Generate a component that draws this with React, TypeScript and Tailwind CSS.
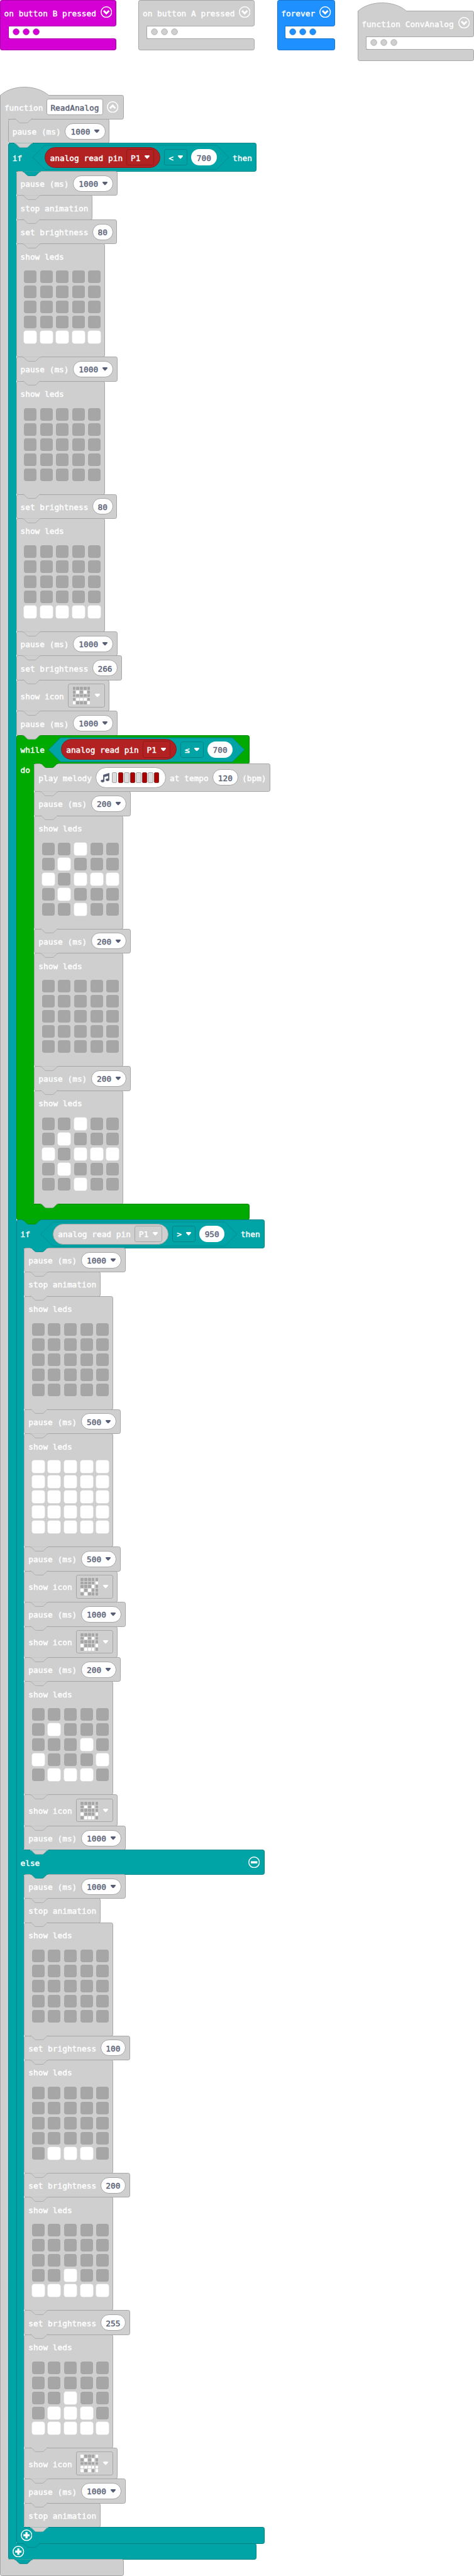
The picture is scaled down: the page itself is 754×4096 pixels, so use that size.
import React from "react";
import type { ReactNode } from "react";

type Tone = "gray" | "teal" | "green" | "magenta" | "blue";

const surface: Record<Tone, string> = {
  gray: "bg-[#cfcfcf] border-[#a6a6a6]",
  teal: "bg-[#00a4a6] border-[#008385]",
  green: "bg-[#00aa00] border-[#008800]",
  magenta: "bg-[#d400d4] border-[#aa00aa]",
  blue: "bg-[#1e90ff] border-[#1873cc]",
};

const fills: Record<Tone, string> = {
  gray: "fill-[#cfcfcf]",
  teal: "fill-[#00a4a6]",
  green: "fill-[#00aa00]",
  magenta: "fill-[#d400d4]",
  blue: "fill-[#1e90ff]",
};

const strokes: Record<Tone, string> = {
  gray: "stroke-[#a6a6a6]",
  teal: "stroke-[#008385]",
  green: "stroke-[#008800]",
  magenta: "stroke-[#aa00aa]",
  blue: "stroke-[#1873cc]",
};

const TAB = "c2,0 3,1 4,2 l4,4 c1,1 2,2 4,2 h12 c2,0 3,-1 4,-2 l4,-4 c1,-1 2,-2 4,-2";

/* Connector tab of the block above, laid over the top edge of this block. */
function Notch({ tone = "gray", inArm = "none" }: { tone?: Tone; inArm?: "none" | "thin" | "wide" }) {
  const left = inArm === "wide" ? "left-[37.9px]" : inArm === "thin" ? "left-[21.9px]" : "left-[9.1px]";
  return (
    <svg className={`absolute -top-[0.5px] ${left} h-[7.2px] w-[28.8px] overflow-visible`} viewBox="0 0 36 9">
      <path className={fills[tone]} d={`M0,-0.8 V0 ${TAB} V-0.8 Z`} />
      <path className={strokes[tone]} d={`M0,0 ${TAB}`} fill="none" strokeWidth="1.1" />
    </svg>
  );
}

function Hat({ tone = "gray" }: { tone?: Tone }) {
  return (
    <svg className="absolute -left-px -top-[17.6px] h-[18.4px] w-[77.6px] overflow-visible" viewBox="0 0 97 23">
      <path className={fills[tone]} d="M0.6,28 V22 C25,0.2 72,0.2 97,22 V23 H92 V28 Z" />
      <path className={strokes[tone]} d="M0.6,28 V22 C25,0.2 72,0.2 97,22" fill="none" strokeWidth="1.2" />
    </svg>
  );
}

function Caret({ dark = false }: { dark?: boolean }) {
  return (
    <svg className="h-[5.6px] w-2 shrink-0" viewBox="0 0 10 7">
      <path
        className={dark ? "fill-[#575e75]" : "fill-white"}
        d="M1.4,0 H8.6 C9.9,0 10.4,1.4 9.5,2.4 L6,6.3 C5.4,6.9 4.6,6.9 4,6.3 L0.5,2.4 C-0.4,1.4 0.1,0 1.4,0 Z"
      />
    </svg>
  );
}

function RoundIcon({ kind }: { kind: "down" | "up" | "plus" | "minus" }) {
  return (
    <svg className="size-[18.4px] shrink-0" viewBox="0 0 23 23" fill="none" stroke="#fff">
      <circle cx="11.5" cy="11.5" r="10.5" strokeWidth="1.8" />
      {kind === "down" && <path d="M6.2,8.8 L11.5,14.2 L16.8,8.8" strokeWidth="3.7" />}
      {kind === "up" && <path d="M6.2,14 L11.5,8.6 L16.8,14" strokeWidth="3.7" />}
      {kind === "plus" && <path d="M11.5,5.3 V17.7 M5.3,11.5 H17.7" strokeWidth="4.3" />}
      {kind === "minus" && <path d="M5,11.5 H18" strokeWidth="4.4" />}
    </svg>
  );
}

function Label({ children, className = "" }: { children: ReactNode; className?: string }) {
  return <span className={`translate-y-[0.6px] ${className}`}>{children}</span>;
}

function Value({ children, menu = false }: { children: ReactNode; menu?: boolean }) {
  return (
    <span
      className={`flex h-[26px] items-center rounded-full border border-[#a6a6a6] bg-white text-[#575e75] ${
        menu ? "gap-[6.8px] pl-[8.4px] pr-[8.4px]" : "px-[7.7px]"
      }`}
    >
      <Label>{children}</Label>
      {menu && <Caret dark />}
    </span>
  );
}

function Row({
  children,
  above = "gray",
  height = "h-[39.4px]",
}: {
  children: ReactNode;
  above?: Tone;
  height?: string;
}) {
  return (
    <div
      className={`relative -mb-px flex w-max items-center gap-[6.4px] rounded-[3.2px] border px-[5.9px] ${surface.gray} ${height}`}
    >
      <Notch tone={above} />
      {children}
    </div>
  );
}

function Pause({ ms, above }: { ms: number; above?: Tone }) {
  return (
    <Row above={above}>
      <Label>pause (ms)</Label>
      <Value menu>{ms}</Value>
    </Row>
  );
}

function StopAnimation() {
  return (
    <Row>
      <Label>stop animation</Label>
    </Row>
  );
}

function Brightness({ level }: { level: number }) {
  return (
    <Row>
      <Label>set brightness</Label>
      <Value>{level}</Value>
    </Row>
  );
}

const OFF = "..... ..... ..... ..... .....";

function ShowLeds({ map = OFF }: { map?: string }) {
  return (
    <div className={`relative -mb-px h-[181px] w-[141.4px] rounded-[3.2px] border ${surface.gray}`}>
      <Notch />
      <div className="flex h-[38px] items-center px-[5.9px]">
        <Label>show leds</Label>
      </div>
      <div className="ml-[11.5px] mt-1 grid w-max grid-cols-5 gap-x-[5.6px] gap-y-1">
        {map
          .replace(/ /g, "")
          .split("")
          .map((c, i) => (
            <span
              key={i}
              className={`size-5 rounded-[4px] ${c === "#" ? "bg-white shadow-[0_0_0_0.6px_#ececec]" : "bg-[#a6a6a6]"}`}
            />
          ))}
      </div>
    </div>
  );
}

function ShowIcon({ map }: { map: string }) {
  return (
    <Row height="h-[50.6px]">
      <Label>show icon</Label>
      <span className="flex h-[37.4px] w-[58.6px] items-center justify-between rounded-[3.2px] border border-[#a6a6a6] pl-[6.4px] pr-[6.4px]">
        <span className="grid grid-cols-5 gap-[1.1px]">
          {map
            .replace(/ /g, "")
            .split("")
            .map((c, i) => (
              <span
                key={i}
                className={`size-[4.7px] rounded-[1px] ${c === "#" ? "bg-white" : "bg-[#a6a6a6]"}`}
              />
            ))}
        </span>
        <Caret />
      </span>
    </Row>
  );
}

function Condition({ op, value, filled = false, muted = false }: { op: string; value: number; filled?: boolean; muted?: boolean }) {
  return (
    <span className="relative flex h-[38.4px] w-[312px] items-center gap-[6.4px] px-[19.2px]">
      <svg className="absolute inset-0 h-full w-full overflow-visible" viewBox="0 0 390 48">
        <path
          d="M24,0 H366 L390,24 L366,48 H24 L0,24 Z"
          fill="#00a4a6"
          stroke={filled ? "#007d80" : "#008c8e"}
          strokeWidth="1.1"
        />
      </svg>
      <span
        className={`relative flex h-[33px] w-[184px] shrink-0 items-center justify-between rounded-full border pl-[7.6px] pr-[8.6px] ${
          muted ? "border-[#a6a6a6] bg-[#cfcfcf]" : "border-[#8e1b1b] bg-[#b22222]"
        }`}
      >
        <Label>analog read pin</Label>
        <span
          className={`flex h-[26.4px] w-[44.4px] items-center justify-between rounded-[3.2px] border pl-[6px] pr-[6px] ${
            muted ? "border-[#a6a6a6]" : "border-[#8e1b1b]"
          }`}
        >
          <Label>P1</Label>
          <Caret />
        </span>
      </span>
      <span className="relative flex h-[26.4px] w-[36.6px] shrink-0 items-center justify-between rounded-[3.2px] border border-[#008385] px-[6px]">
        <Label>{op}</Label>
        <Caret />
      </span>
      <span className="relative flex h-[26px] w-[40.2px] shrink-0 items-center justify-center rounded-full bg-white text-[#575e75]">
        <Label>{value}</Label>
      </span>
    </span>
  );
}

function Body({ tone, children, label }: { tone: Tone; children: ReactNode; label?: string }) {
  return (
    <div className="flex">
      <div
        className={`relative z-10 -mb-px shrink-0 border-l ${surface[tone]} ${label ? "w-[28.8px] pl-[5.9px] pt-[0.4px]" : "w-[12.8px]"}`}
      >
        {label && <Label className="inline-block">{label}</Label>}
      </div>
      <div>{children}</div>
    </div>
  );
}

function Foot({
  tone,
  width,
  above = "gray",
  arm = "thin",
  icon = false,
}: {
  tone: Tone;
  width: string;
  above?: Tone;
  arm?: "thin" | "wide";
  icon?: boolean;
}) {
  return (
    <div className={`relative -mb-px flex h-[26.6px] items-center rounded-[3.2px] rounded-tl-none border pl-[6.4px] ${surface[tone]} ${width}`}>
      <Notch tone={above} inArm={arm} />
      {icon && <RoundIcon kind="plus" />}
    </div>
  );
}

function IfHead({ above, children }: { above: Tone; children: ReactNode }) {
  return (
    <div
      className={`relative -mb-px flex h-[45.8px] w-[395px] items-center gap-[6.4px] rounded-[3.2px] rounded-bl-none border px-[5.9px] ${surface.teal}`}
    >
      <Notch tone={above} />
      <Label className="w-[25.9px]">if</Label>
      {children}
      <Label>then</Label>
    </div>
  );
}

function Dots({ tone }: { tone: Tone }) {
  return (
    <svg className="h-[11.2px] w-[43.2px]" viewBox="0 0 54 14">
      {[7, 27, 47].map((x) => (
        <circle key={x} cx={x} cy="7" r="6" className={`${fills[tone]} ${strokes[tone]}`} strokeWidth="1" />
      ))}
    </svg>
  );
}

function EventBlock({ tone, title, width, hat = false }: { tone: Tone; title: string; width: string; hat?: boolean }) {
  return (
    <div className={`${width} ${hat ? "mt-[17px]" : ""}`}>
      <div
        className={`relative -mb-px flex h-[42.3px] items-start justify-between rounded-[3.2px] rounded-bl-none border pl-[5.6px] pr-[5.8px] pt-[9px] ${surface[tone]} ${hat ? "rounded-tl-none" : ""}`}
      >
        {hat && <Hat tone={tone} />}
        <Label className="mt-[0.6px]">{title}</Label>
        <RoundIcon kind="down" />
      </div>
      <div className="flex h-[19.4px]">
        <div className={`relative z-10 -mb-px w-[12.8px] border-l ${surface[tone]}`} />
        <div className={`flex grow ${surface[tone]} border-0`}>
          <div className={`flex grow items-center rounded-l-[3.2px] border-l pl-[6px] ${surface[tone]} bg-white`}>
            <Dots tone={tone} />
          </div>
        </div>
      </div>
      <div className={`relative h-[19.8px] rounded-[3.2px] rounded-tl-none border ${surface[tone]}`} />
    </div>
  );
}

function Melody() {
  return (
    <span className="flex h-[33px] w-[111.3px] items-center rounded-full border border-[#a6a6a6] bg-white pl-[6.8px]">
      <svg className="h-[15.2px] w-[14.4px] shrink-0" viewBox="0 0 18 19" fill="#575e75">
        <path d="M5.2,3.6 L17.4,0 V13.4 H15 V6 L7.6,8.2 V16 H5.2 Z" />
        <ellipse cx="4" cy="16" rx="3.6" ry="2.7" />
        <ellipse cx="13.8" cy="13.6" rx="3.6" ry="2.7" />
      </svg>
      <span className="ml-[3.4px] flex gap-[1.2px]">
        {[0, 1, 2, 3, 4, 5, 6, 7].map((n) => (
          <span
            key={n}
            className={`h-[17.6px] w-[8.4px] rounded-[2px] border ${
              n % 2 ? "border-[#8c2a2a] bg-[#a80000]" : "border-[#a6a6a6] bg-[#dcdcdc]"
            }`}
          />
        ))}
      </span>
    </span>
  );
}

const ARROW = "..#.. .#... #.### .#... ..#..";
const BASE = "..... ..... ..... ..... #####";
const SMILE = "..... .#.#. ..... #...# .###.";

function WhileLoop() {
  return (
    <div>
      <div
        className={`relative -mb-px flex h-[45.8px] w-[371px] items-center gap-[6.4px] rounded-[3.2px] rounded-bl-none border px-[5.9px] ${surface.green}`}
      >
        <Notch />
        <Label>while</Label>
        <Condition op="≤" value={700} filled />
      </div>
      <Body tone="green" label="do">
        <Row above="green" height="h-[45.8px]">
          <Label>play melody</Label>
          <Melody />
          <Label>at tempo</Label>
          <Value>120</Value>
          <Label>(bpm)</Label>
        </Row>
        <Pause ms={200} />
        <ShowLeds map={ARROW} />
        <Pause ms={200} />
        <ShowLeds />
        <Pause ms={200} />
        <ShowLeds map={ARROW} />
      </Body>
      <Foot tone="green" width="w-[371px]" arm="wide" />
    </div>
  );
}

function InnerIf() {
  return (
    <div>
      <IfHead above="green">
        <Condition op=">" value={950} muted />
      </IfHead>
      <Body tone="teal">
        <Pause ms={1000} above="teal" />
        <StopAnimation />
        <ShowLeds />
        <Pause ms={500} />
        <ShowLeds map="##### ##### ##### ##### #####" />
        <Pause ms={500} />
        <ShowIcon map="..... ....# ...#. #.#.. .#..." />
        <Pause ms={1000} />
        <ShowIcon map={SMILE} />
        <Pause ms={200} />
        <ShowLeds map="..... .#... ...#. #...# .###." />
        <ShowIcon map={SMILE} />
        <Pause ms={1000} />
      </Body>
      <div
        className={`relative -mb-px flex h-[39.4px] w-[395px] items-center justify-between rounded-r-[3.2px] border pl-[5.9px] pr-[6.4px] ${surface.teal}`}
      >
        <Notch inArm="thin" />
        <Label>else</Label>
        <RoundIcon kind="minus" />
      </div>
      <Body tone="teal">
        <Pause ms={1000} above="teal" />
        <StopAnimation />
        <ShowLeds />
        <Brightness level={100} />
        <ShowLeds map="..... ..... ..... ..... .###." />
        <Brightness level={200} />
        <ShowLeds map="..... ..... ..... ..#.. #####" />
        <Brightness level={255} />
        <ShowLeds map="..... ..... ..#.. .###. #####" />
        <ShowIcon map="#...# .#.#. ..... ##### #.#.#" />
        <Pause ms={1000} />
        <StopAnimation />
      </Body>
      <Foot tone="teal" width="w-[395px]" icon />
    </div>
  );
}

function OuterIf() {
  return (
    <div>
      <IfHead above="gray">
        <Condition op="<" value={700} />
      </IfHead>
      <Body tone="teal">
        <Pause ms={1000} above="teal" />
        <StopAnimation />
        <Brightness level={80} />
        <ShowLeds map={BASE} />
        <Pause ms={1000} />
        <ShowLeds />
        <Brightness level={80} />
        <ShowLeds map={BASE} />
        <Pause ms={1000} />
        <Brightness level={266} />
        <ShowIcon map="..... .#.#. ..... .###. #...#" />
        <Pause ms={1000} />
        <WhileLoop />
        <InnerIf />
      </Body>
      <Foot tone="teal" above="teal" width="w-[395px]" icon />
    </div>
  );
}

export default function App() {
  return (
    <div className="flex h-[4096px] w-[754px] flex-col overflow-hidden whitespace-pre bg-white font-['DejaVu_Sans_Mono',monospace] text-[12.8px] leading-[19.2px] text-white [-webkit-text-stroke:0.4px]">
      <div className="flex h-[150.5px] shrink-0 items-start">
        <EventBlock tone="magenta" title="on button B pressed" width="w-[184.8px]" />
        <div className="w-[35.6px] shrink-0" />
        <EventBlock tone="gray" title="on button A pressed" width="w-[184.8px]" />
        <div className="w-[35.4px] shrink-0" />
        <EventBlock tone="blue" title="forever" width="w-[92.8px]" />
        <div className="w-[35.4px] shrink-0" />
        <EventBlock tone="gray" title="function ConvAnalog" width="w-[185px]" hat />
      </div>
      <div>
        <div
          className={`relative -mb-px flex h-[39.4px] w-[196.6px] items-center rounded-r-[3.2px] border pl-[5.9px] ${surface.gray}`}
        >
          <Hat />
          <Label>function</Label>
          <span className="ml-[5.4px] flex h-[26.4px] w-[90px] items-center justify-center rounded-[3.2px] border border-[#a6a6a6] bg-white text-[#575e75]">
            <Label>ReadAnalog</Label>
          </span>
          <span className="ml-[6.4px] flex">
            <RoundIcon kind="up" />
          </span>
        </div>
        <Body tone="gray">
          <Pause ms={1000} />
          <OuterIf />
        </Body>
        <Foot tone="gray" above="teal" width="w-[196.6px]" />
      </div>
    </div>
  );
}
